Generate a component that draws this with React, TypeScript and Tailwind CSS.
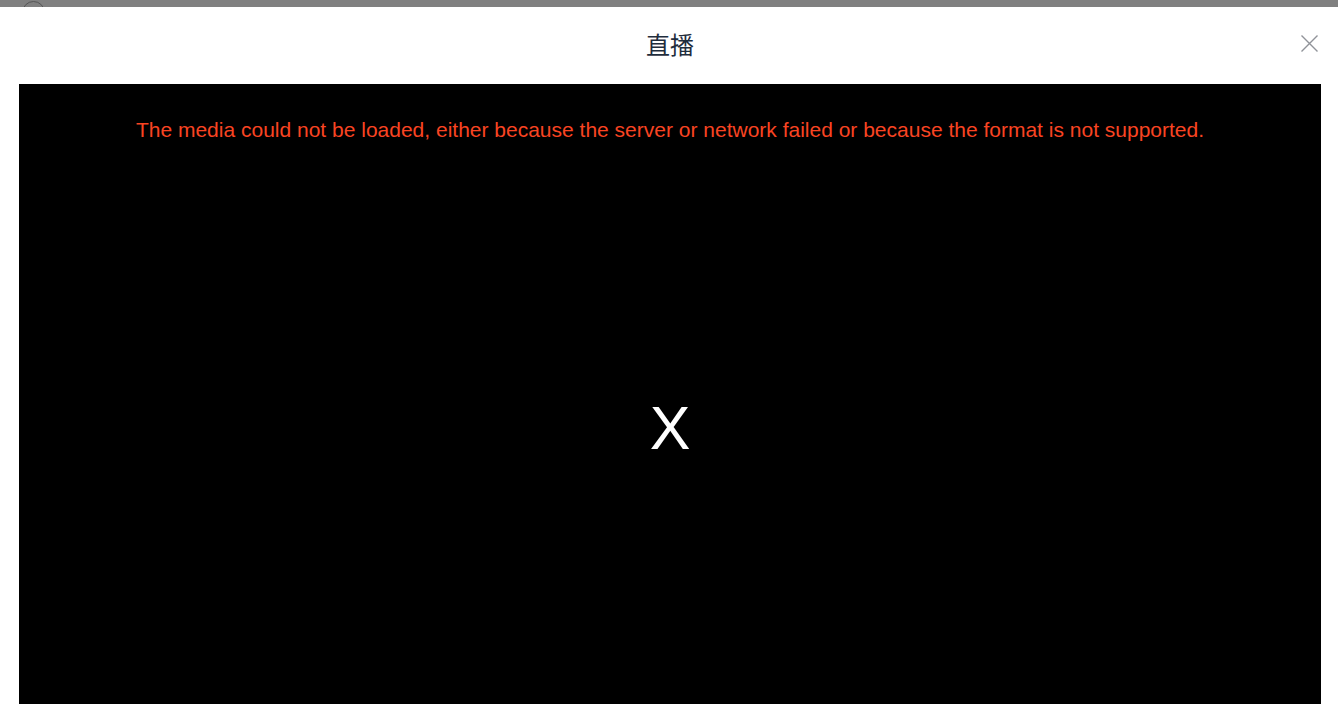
import React from "react";

export default function App() {
  return (
    <div className="w-[1338px] h-[704px] overflow-hidden bg-white flex flex-col" style={{ fontFamily: '"Liberation Sans", Arial, sans-serif' }}>
      <div className="relative h-[7px] shrink-0 bg-[#808080] overflow-hidden">
        <div className="absolute left-[22px] top-[1px] w-[23px] h-[23px] rounded-full border border-[#555]" />
      </div>
      <div className="flex-1 flex flex-col pl-[19px] pr-[17px]">
        <div className="relative h-[77px] shrink-0 flex items-center justify-center">
          <span className="text-[24px] text-[#1f2d3d] leading-none -mt-[4px]" style={{ fontFamily: '"Noto Sans CJK SC", "Noto Sans", sans-serif' }}>直播</span>
          <svg className="absolute right-[2px] top-[27px]" width="19" height="19" viewBox="0 0 19 19">
            <path d="M1.5 1.5 L17.5 17.5 M17.5 1.5 L1.5 17.5" stroke="#909399" strokeWidth="1.4" fill="none" />
          </svg>
        </div>
        <div className="flex-1 bg-black flex flex-col items-center">
          <div className="mt-[34px] text-[21px] leading-[24px] text-[#f94422] whitespace-nowrap">
            The media could not be loaded, either because the server or network failed or because the format is not supported.
          </div>
          <div className="mt-[256px] text-[61px] leading-none text-white">X</div>
        </div>
      </div>
    </div>
  );
}
